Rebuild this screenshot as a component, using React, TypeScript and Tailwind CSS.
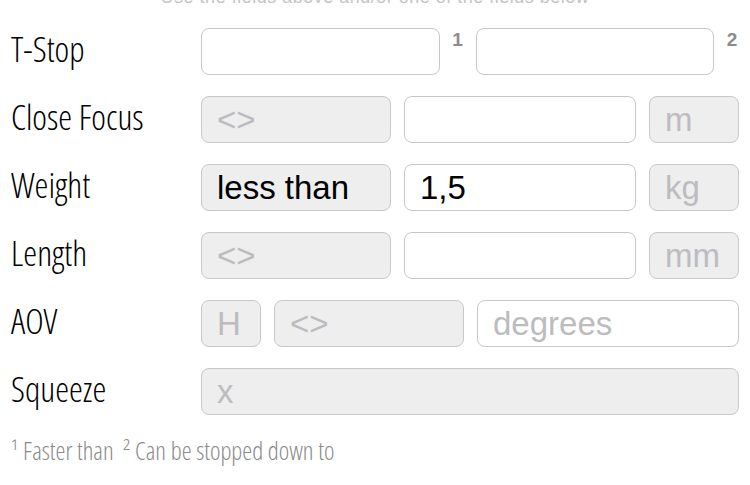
type BoxProps = { text?: string; placeholder?: string; disabled?: boolean; className?: string };

function Box({ text, placeholder, disabled, className = "" }: BoxProps) {
  return (
    <div
      className={
        "h-[47px] rounded-[8px] border border-[#c8c8c8] flex items-center px-[15px] text-[33px] font-['Liberation_Sans',Arial,sans-serif] whitespace-nowrap overflow-hidden " +
        (disabled ? "bg-[#eeeeee] " : "bg-white ") +
        className
      }
    >
      {text ? (
        <span className="text-black">{text}</span>
      ) : placeholder ? (
        <span className="text-[#bcbcc0]">{placeholder}</span>
      ) : null}
    </div>
  );
}

function Label({ children }: { children: string }) {
  return (
    <div className="w-[201px] shrink-0 pl-[11px] pb-[6px] text-[35px] text-black font-['Open_Sans',sans-serif] font-[350] font-stretch-condensed leading-none">
      {children}
    </div>
  );
}

function Sup({ n }: { n: string }) {
  return (
    <div className="w-[36px] shrink-0 self-start text-center text-[19px] font-bold text-[#8c8c8c] font-['Liberation_Sans',Arial,sans-serif] leading-none pt-[2px]">
      {n}
    </div>
  );
}

export default function App() {
  return (
    <div className="w-[750px] h-[485px] overflow-hidden bg-white">
      <div className="-mt-[13px] h-[21px] text-center text-[18px] leading-[21px] tracking-[0.5px] text-[#c4c4c4] font-['Liberation_Sans',Arial,sans-serif]">
        Use the fields above and/or one of the fields below
      </div>
      <div className="mt-[20px] flex flex-col gap-[21px]">
        <div className="flex items-center">
          <Label>T-Stop</Label>
          <Box className="flex-1" />
          <Sup n="1" />
          <Box className="flex-1" />
          <Sup n="2" />
        </div>
        <div className="flex items-center pr-[11px]">
          <Label>Close Focus</Label>
          <div className="flex flex-1 gap-[13px]">
            <Box disabled placeholder="<>" className="w-[190px]" />
            <Box className="flex-1" />
            <Box disabled placeholder="m" className="w-[90px]" />
          </div>
        </div>
        <div className="flex items-center pr-[11px]">
          <Label>Weight</Label>
          <div className="flex flex-1 gap-[13px]">
            <Box disabled text="less than" className="w-[190px]" />
            <Box text="1,5" className="flex-1" />
            <Box disabled placeholder="kg" className="w-[90px]" />
          </div>
        </div>
        <div className="flex items-center pr-[11px]">
          <Label>Length</Label>
          <div className="flex flex-1 gap-[13px]">
            <Box disabled placeholder="<>" className="w-[190px]" />
            <Box className="flex-1" />
            <Box disabled placeholder="mm" className="w-[90px]" />
          </div>
        </div>
        <div className="flex items-center pr-[11px]">
          <Label>AOV</Label>
          <div className="flex flex-1 gap-[13px]">
            <Box disabled placeholder="H" className="w-[60px]" />
            <Box disabled placeholder="<>" className="w-[190px]" />
            <Box placeholder="degrees" className="flex-1" />
          </div>
        </div>
        <div className="flex items-center pr-[11px]">
          <Label>Squeeze</Label>
          <Box disabled placeholder="x" className="flex-1" />
        </div>
      </div>
      <div className="mt-[23px] pl-[11px] text-[25px] text-[#8a8a8a] font-['Open_Sans',sans-serif] font-[350] font-stretch-condensed leading-none">
        ¹ Faster than&nbsp; ² Can be stopped down to
      </div>
    </div>
  );
}
